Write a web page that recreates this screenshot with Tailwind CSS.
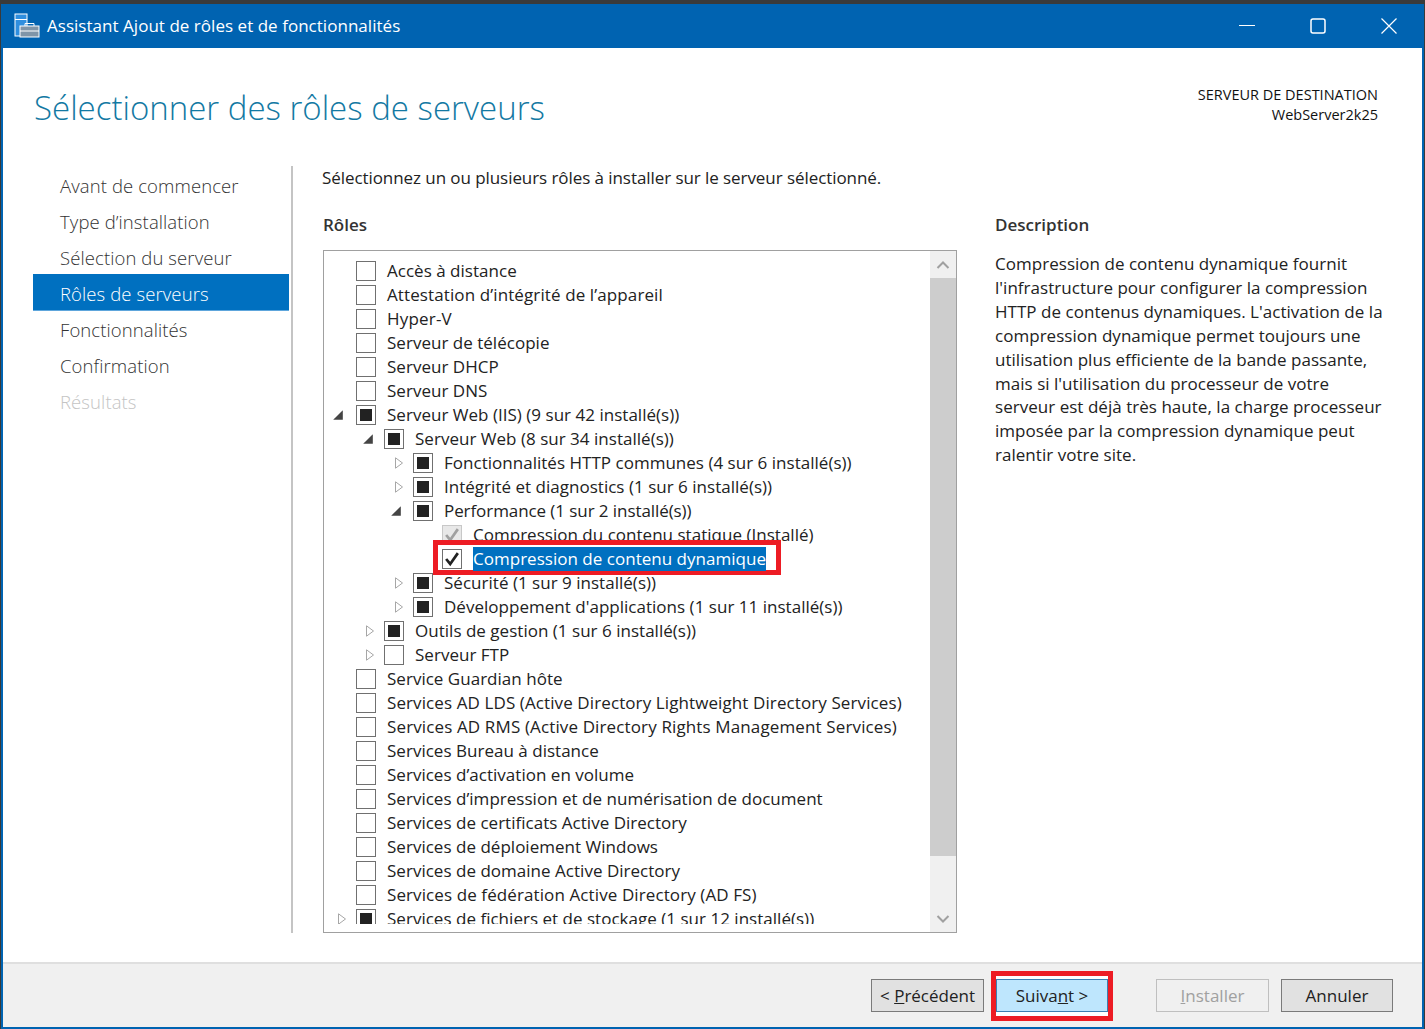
<!DOCTYPE html>
<html lang="fr">
<head>
<meta charset="UTF-8">
<title>Assistant Ajout de rôles et de fonctionnalités</title>
<script src="https://cdn.jsdelivr.net/npm/@tailwindcss/browser@4"></script>
</head>
<body class="w-[1425px] h-[1029px] overflow-hidden bg-[#3a3a3a] pt-[4px] font-['Open_Sans',sans-serif] text-[17px] text-[#222] whitespace-nowrap">
<svg class="hidden">
  <symbol id="open" viewBox="0 0 10 12"><path d="M1.500.800 8.500 6l-7 5.200z" fill="#fff" stroke="#a6a6a6"/></symbol>
  <symbol id="down" viewBox="0 0 10 10"><path d="M9 1v8H1z" fill="#444"/></symbol>
  <symbol id="check" viewBox="0 0 20 20"><path d="M3.500 10 8 15.500 16.500 3.500" fill="none" stroke="currentColor" stroke-width="3"/></symbol>
</svg>
<div class="flex flex-col h-[1025px] bg-white border-x-[2px] border-b-[2px] border-[#0063b1] ml-[1px] w-[1423px]">
  <!-- title bar -->
  <div class="flex items-center h-[44px] bg-[#0063b1] text-white shrink-0">
    <svg class="ml-[11px] w-[26px] h-[26px]" viewBox="0 0 26 26">
      <rect x="1" y="1" width="12" height="22" fill="#2f8fdf" stroke="#fff"/>
      <path d="M1 6.500h12" stroke="#fff"/>
      <rect x="6" y="13" width="19" height="11" fill="#7f95a8" stroke="#fff"/>
      <path d="M11 13v-2.500h9V13M6 18h19" fill="none" stroke="#fff"/>
    </svg>
    <span class="ml-[7px] leading-none -mt-[2px] tracking-[0.03px]">Assistant Ajout de rôles et de fonctionnalités</span>
    <div class="ml-auto flex items-center gap-[55px] mr-[25px]">
      <svg class="w-[16px] h-[16px]" viewBox="0 0 16 16"><path d="M0 7.500h16" stroke="#fff"/></svg>
      <svg class="w-[16px] h-[16px]" viewBox="0 0 16 16"><rect x="1" y="1" width="14" height="14" rx="2" fill="none" stroke="#fff" stroke-width="1.500"/></svg>
      <svg class="w-[16px] h-[16px]" viewBox="0 0 16 16"><path d="M.5.500l15 15m0-15-15 15" stroke="#fff" stroke-width="1.200"/></svg>
    </div>
  </div>
  <!-- header -->
  <div class="flex justify-between h-[118px] shrink-0 pl-[31px] pr-[44px]">
    <h1 class="text-[33px] font-light text-[#1379a3] leading-none mt-[43px]">Sélectionner des rôles de serveurs</h1>
    <div class="text-right text-[14.500px] leading-[20px] text-[#111] mt-[37px]">SERVEUR DE DESTINATION<br>WebServer2k25</div>
  </div>
  <!-- main -->
  <div class="flex h-[767px] shrink-0">
    <nav class="w-[290px] pl-[30px] shrink-0 border-r-[2px] border-[#c4c4c4] text-[18.500px] tracking-[0.1px] font-light text-[#333]">
      <div class="flex items-center h-[36px] w-[256px] pl-[27px] pt-[4px]">Avant de commencer</div>
      <div class="flex items-center h-[36px] w-[256px] pl-[27px] pt-[4px]">Type d’installation</div>
      <div class="flex items-center h-[36px] w-[256px] pl-[27px] pt-[4px]">Sélection du serveur</div>
      <div class="flex items-center h-[37px] w-[256px] pl-[27px] pt-[4px] bg-[#0070c0] border-b border-[#5ea6dc] text-white">Rôles de serveurs</div>
      <div class="flex items-center h-[35px] w-[256px] pl-[27px] pt-[3px]">Fonctionnalités</div>
      <div class="flex items-center h-[36px] w-[256px] pl-[27px] pt-[4px]">Confirmation</div>
      <div class="flex items-center h-[36px] w-[256px] pl-[27px] pt-[4px] text-[#c4c4c4]">Résultats</div>
    </nav>
    <div class="flex flex-col pl-[30px] w-[673px] shrink-0">
      <div class="h-[24px] leading-[24px] -ml-[1px] tracking-[-0.07px]">Sélectionnez un ou plusieurs rôles à installer sur le serveur sélectionné.</div>
      <div class="mt-[23px] h-[24px] leading-[24px] font-semibold text-[#333]">Rôles</div>
      <div class="mt-[13px] flex h-[683px] w-[634px] border border-[#a0a0a0] overflow-hidden">
        <div class="flex-1 h-[673px] pt-[8px] overflow-hidden tracking-[0.02px]">
          <div class="flex items-center h-[24px] pl-[32px]"><span class="w-[20px] h-[20px] border border-[#707070] mr-[11px]"></span>Accès à distance</div>
          <div class="flex items-center h-[24px] pl-[32px] tracking-[0.11px]"><span class="w-[20px] h-[20px] border border-[#707070] mr-[11px]"></span>Attestation d’intégrité de l’appareil</div>
          <div class="flex items-center h-[24px] pl-[32px] tracking-[0.2px]"><span class="w-[20px] h-[20px] border border-[#707070] mr-[11px]"></span>Hyper-V</div>
          <div class="flex items-center h-[24px] pl-[32px]"><span class="w-[20px] h-[20px] border border-[#707070] mr-[11px]"></span>Serveur de télécopie</div>
          <div class="flex items-center h-[24px] pl-[32px]"><span class="w-[20px] h-[20px] border border-[#707070] mr-[11px]"></span>Serveur DHCP</div>
          <div class="flex items-center h-[24px] pl-[32px]"><span class="w-[20px] h-[20px] border border-[#707070] mr-[11px]"></span>Serveur DNS</div>
          <div class="flex items-center h-[24px] pl-[8px]"><svg class="w-[12px] h-[12px] mr-[12px]"><use href="#down"/></svg><span class="flex items-center justify-center w-[20px] h-[20px] border border-[#707070] mr-[11px]"><span class="w-[12px] h-[12px] bg-[#222]"></span></span>Serveur Web (IIS) (9 sur 42 installé(s))</div>
          <div class="flex items-center h-[24px] pl-[38px]"><svg class="w-[12px] h-[12px] mr-[10px]"><use href="#down"/></svg><span class="flex items-center justify-center w-[20px] h-[20px] border border-[#707070] mr-[11px]"><span class="w-[12px] h-[12px] bg-[#222]"></span></span>Serveur Web (8 sur 34 installé(s))</div>
          <div class="flex items-center h-[24px] pl-[70px]"><svg class="w-[10px] h-[12px] mr-[9px]"><use href="#open"/></svg><span class="flex items-center justify-center w-[20px] h-[20px] border border-[#707070] mr-[11px]"><span class="w-[12px] h-[12px] bg-[#222]"></span></span>Fonctionnalités HTTP communes (4 sur 6 installé(s))</div>
          <div class="flex items-center h-[24px] pl-[70px]"><svg class="w-[10px] h-[12px] mr-[9px]"><use href="#open"/></svg><span class="flex items-center justify-center w-[20px] h-[20px] border border-[#707070] mr-[11px]"><span class="w-[12px] h-[12px] bg-[#222]"></span></span>Intégrité et diagnostics (1 sur 6 installé(s))</div>
          <div class="flex items-center h-[24px] pl-[66px] tracking-[-0.08px]"><svg class="w-[12px] h-[12px] mr-[11px]"><use href="#down"/></svg><span class="flex items-center justify-center w-[20px] h-[20px] border border-[#707070] mr-[11px]"><span class="w-[12px] h-[12px] bg-[#222]"></span></span>Performance (1 sur 2 installé(s))</div>
          <div class="flex items-center h-[24px] pl-[118px]"><span class="flex items-center justify-center w-[20px] h-[20px] border border-[#c8c8c8] bg-[#e8e8e8] text-[#a0a0a0] mr-[11px]"><svg class="w-[18px] h-[18px]"><use href="#check"/></svg></span>Compression du contenu statique (Installé)</div>
          <div class="relative flex items-center h-[24px] pl-[118px]">
            <div class="absolute left-[109px] -top-[7px] w-[348px] h-[35px] border-[5px] border-[#ed1c24] bg-white"></div>
            <span class="relative flex items-center justify-center w-[20px] h-[20px] border border-[#707070] bg-white text-[#222] mr-[11px]"><svg class="w-[18px] h-[18px]"><use href="#check"/></svg></span>
            <span class="relative bg-[#0070c0] text-white leading-[24px]">Compression de contenu dynamique</span>
          </div>
          <div class="flex items-center h-[24px] pl-[70px]"><svg class="w-[10px] h-[12px] mr-[9px]"><use href="#open"/></svg><span class="flex items-center justify-center w-[20px] h-[20px] border border-[#707070] mr-[11px]"><span class="w-[12px] h-[12px] bg-[#222]"></span></span>Sécurité (1 sur 9 installé(s))</div>
          <div class="flex items-center h-[24px] pl-[70px]"><svg class="w-[10px] h-[12px] mr-[9px]"><use href="#open"/></svg><span class="flex items-center justify-center w-[20px] h-[20px] border border-[#707070] mr-[11px]"><span class="w-[12px] h-[12px] bg-[#222]"></span></span>Développement d'applications (1 sur 11 installé(s))</div>
          <div class="flex items-center h-[24px] pl-[41px]"><svg class="w-[10px] h-[12px] mr-[9px]"><use href="#open"/></svg><span class="flex items-center justify-center w-[20px] h-[20px] border border-[#707070] mr-[11px]"><span class="w-[12px] h-[12px] bg-[#222]"></span></span>Outils de gestion (1 sur 6 installé(s))</div>
          <div class="flex items-center h-[24px] pl-[41px]"><svg class="w-[10px] h-[12px] mr-[9px]"><use href="#open"/></svg><span class="w-[20px] h-[20px] border border-[#707070] mr-[11px]"></span>Serveur FTP</div>
          <div class="flex items-center h-[24px] pl-[32px]"><span class="w-[20px] h-[20px] border border-[#707070] mr-[11px]"></span>Service Guardian hôte</div>
          <div class="flex items-center h-[24px] pl-[32px] tracking-[0.1px]"><span class="w-[20px] h-[20px] border border-[#707070] mr-[11px]"></span>Services AD LDS (Active Directory Lightweight Directory Services)</div>
          <div class="flex items-center h-[24px] pl-[32px] tracking-[0.13px]"><span class="w-[20px] h-[20px] border border-[#707070] mr-[11px]"></span>Services AD RMS (Active Directory Rights Management Services)</div>
          <div class="flex items-center h-[24px] pl-[32px]"><span class="w-[20px] h-[20px] border border-[#707070] mr-[11px]"></span>Services Bureau à distance</div>
          <div class="flex items-center h-[24px] pl-[32px]"><span class="w-[20px] h-[20px] border border-[#707070] mr-[11px]"></span>Services d’activation en volume</div>
          <div class="flex items-center h-[24px] pl-[32px]"><span class="w-[20px] h-[20px] border border-[#707070] mr-[11px]"></span>Services d’impression et de numérisation de document</div>
          <div class="flex items-center h-[24px] pl-[32px]"><span class="w-[20px] h-[20px] border border-[#707070] mr-[11px]"></span>Services de certificats Active Directory</div>
          <div class="flex items-center h-[24px] pl-[32px]"><span class="w-[20px] h-[20px] border border-[#707070] mr-[11px]"></span>Services de déploiement Windows</div>
          <div class="flex items-center h-[24px] pl-[32px]"><span class="w-[20px] h-[20px] border border-[#707070] mr-[11px]"></span>Services de domaine Active Directory</div>
          <div class="flex items-center h-[24px] pl-[32px] tracking-[0.1px]"><span class="w-[20px] h-[20px] border border-[#707070] mr-[11px]"></span>Services de fédération Active Directory (AD FS)</div>
          <div class="flex items-center h-[24px] pl-[13px]"><svg class="w-[10px] h-[12px] mr-[9px]"><use href="#open"/></svg><span class="flex items-center justify-center w-[20px] h-[20px] border border-[#707070] mr-[11px]"><span class="w-[12px] h-[12px] bg-[#222]"></span></span>Services de fichiers et de stockage (1 sur 12 installé(s))</div>
        </div>
        <!-- scrollbar -->
        <div class="flex flex-col w-[26px] shrink-0 bg-[#f0f0f0]">
          <div class="flex items-center justify-center h-[27px]"><svg class="w-[14px] h-[10px]" viewBox="0 0 14 10"><path d="M1.500 8 7 2.500 12.500 8" fill="none" stroke="#a0a0a0" stroke-width="2"/></svg></div>
          <div class="h-[578px] bg-[#cdcdcd]"></div>
          <div class="flex-1"></div>
          <div class="flex items-center justify-center h-[27px]"><svg class="w-[14px] h-[10px]" viewBox="0 0 14 10"><path d="M1.500 2 7 7.500 12.500 2" fill="none" stroke="#a0a0a0" stroke-width="2"/></svg></div>
        </div>
      </div>
    </div>
    <div class="pl-[29px] pt-[47px]">
      <div class="h-[24px] leading-[24px] font-semibold text-[#333]">Description</div>
      <div class="mt-[15px] leading-[23.900px] text-[#222] tracking-[0.03px]">Compression de contenu dynamique fournit<br>l'infrastructure pour configurer la compression<br>HTTP de contenus dynamiques. L'activation de la<br>compression dynamique permet toujours une<br>utilisation plus efficiente de la bande passante,<br>mais si l'utilisation du processeur de votre<br>serveur est déjà très haute, la charge processeur<br>imposée par la compression dynamique peut<br>ralentir votre site.</div>
    </div>
  </div>
  <!-- footer -->
  <div class="flex items-start flex-1 mt-[29px] bg-[#f0f0f0] border-t-[2px] border-[#dfdfdf] pl-[868px] pt-[15px]">
    <button class="w-[113px] h-[33px] bg-[#e1e1e1] border border-[#7a7a7a]">&lt; <u>P</u>récédent</button>
    <div class="ml-[7px] w-[122px] h-[50px] -mt-[8px] border-[5px] border-[#ed1c24] bg-white pt-[3px]"><button class="block w-full h-[33px] bg-[#bee6fd] border border-[#3c7fb1]">Suiva<u>n</u>t &gt;</button></div>
    <button class="ml-[43px] w-[113px] h-[33px] bg-[#f0f0f0] border border-[#bfbfbf] text-[#a0a0a0]"><u>I</u>nstaller</button>
    <button class="ml-[12px] w-[112px] h-[33px] bg-[#e1e1e1] border border-[#7a7a7a]">Annuler</button>
  </div>
</div>
</body>
</html>
